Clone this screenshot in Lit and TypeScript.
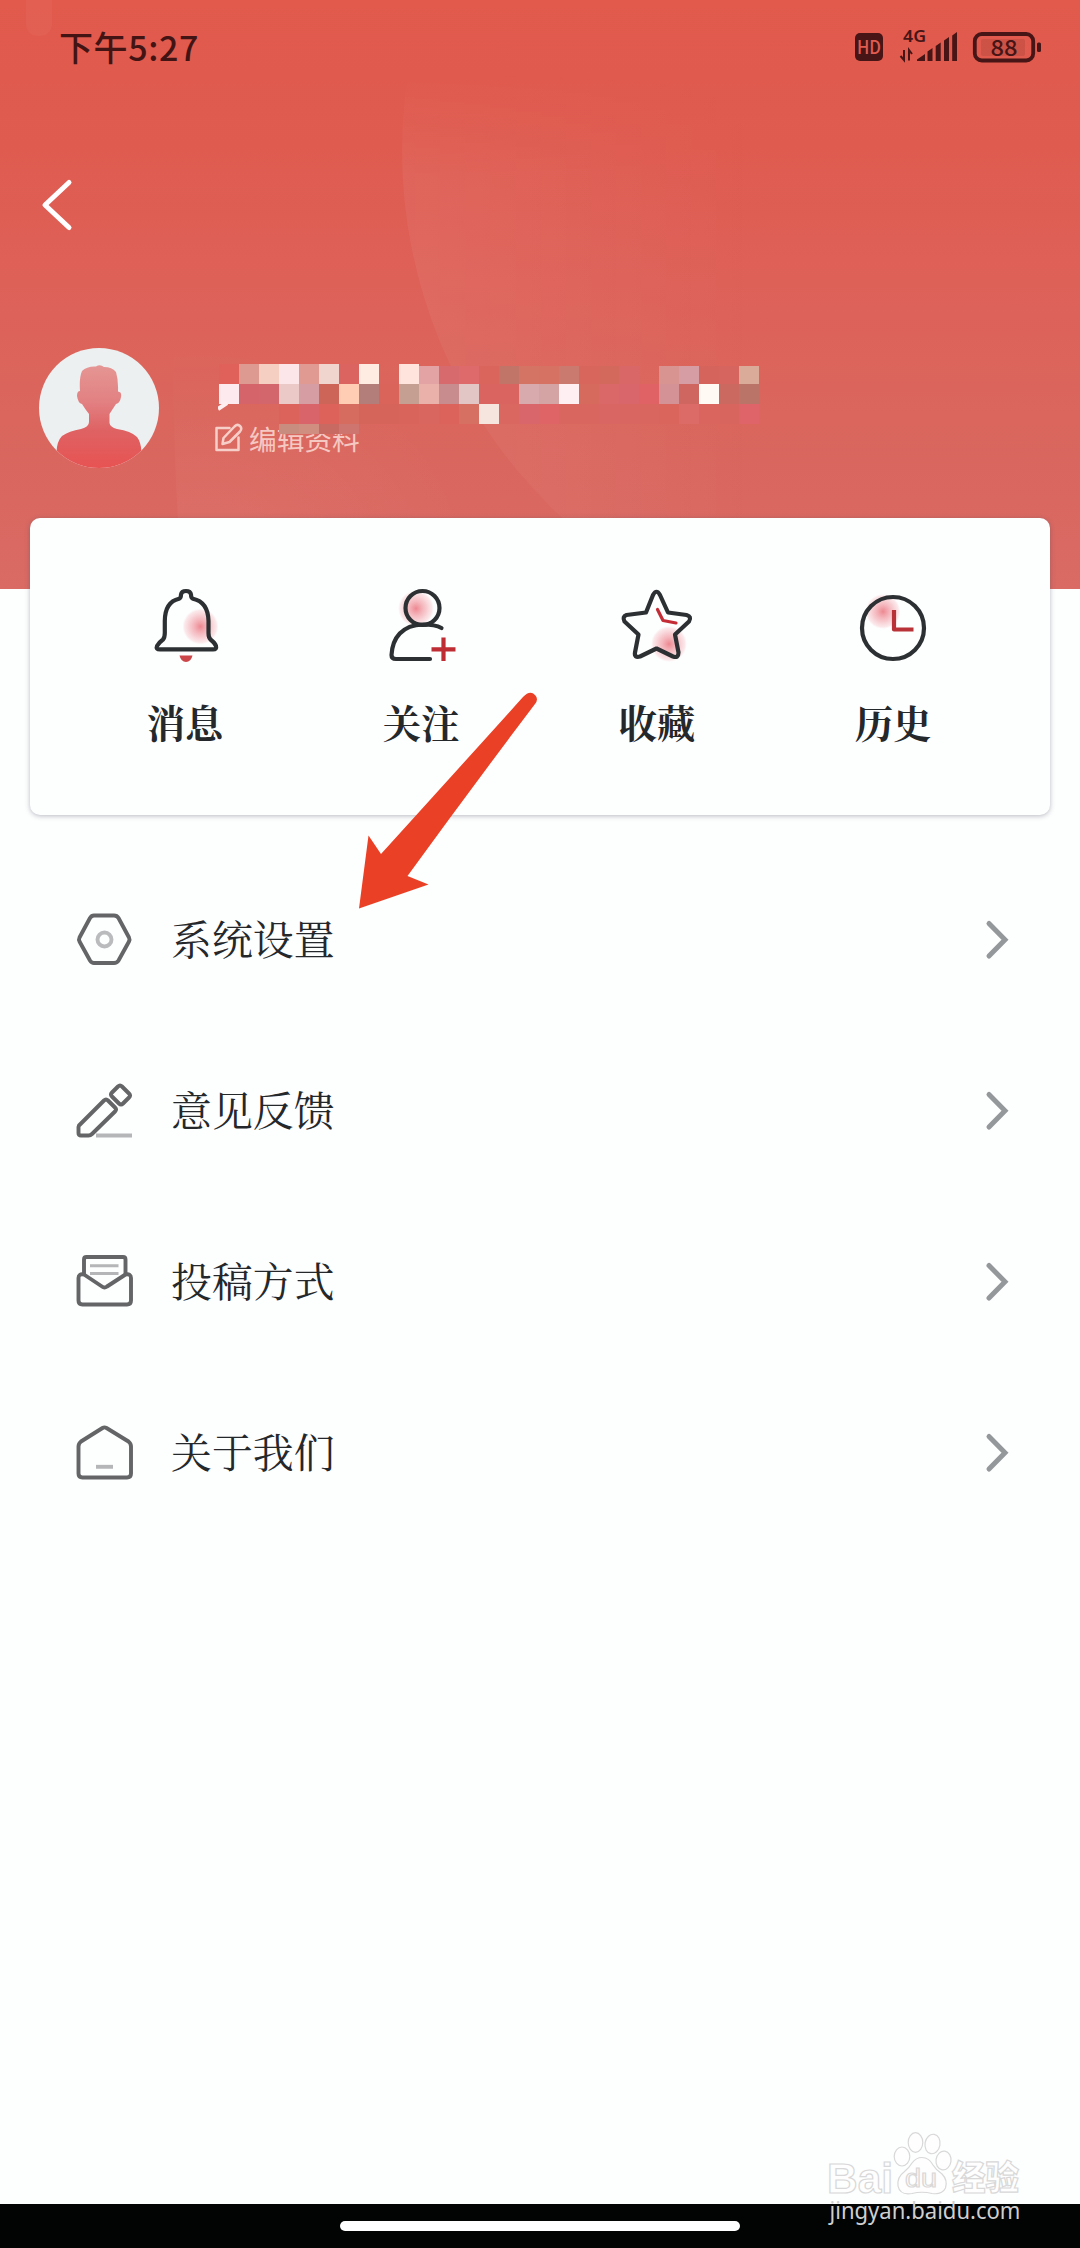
import { LitElement, html, css, svg } from "lit";
import { customElement, property } from "lit/decorators.js";

const SERIF = css`"Noto Serif CJK SC", "Source Han Serif SC", "Noto Sans CJK SC", serif`;

@customElement("status-bar")
class StatusBar extends LitElement {
  static styles = css`
    :host {
      display: flex;
      justify-content: space-between;
      height: 98px;
      box-sizing: border-box;
      padding: 22px 38px 0 59px;
      color: #431414;
      font-family: "Noto Sans CJK SC", sans-serif;
    }
    .time {
      font-size: 34px;
      line-height: 50px;
      font-weight: 500;
      letter-spacing: 0.6px;
    }
    .icons {
      display: block;
      width: 190px;
      height: 50px;
    }
  `;
  render() {
    return html`
      <div class="time">下午5:27</div>
      <svg class="icons" viewBox="852 22 190 50" fill="#471516">
        <rect x="855" y="33" width="28" height="28" rx="5" />
        <text x="857" y="53.8" font-size="18" font-weight="500" textLength="24" lengthAdjust="spacingAndGlyphs" fill="#e05c50" font-family="Noto Sans CJK SC">HD</text>
        <text x="903" y="41.800" font-size="16.500" font-weight="600" textLength="23" lengthAdjust="spacingAndGlyphs" font-family="Noto Sans">4G</text>
        <path d="M904 50v10l-3.500-4M909 60.500V50l3 4" fill="none" stroke="#471516" stroke-width="2" />
        <path d="M917 61v-1.500l8-5.500v7zM927.500 61V51.500l5-3.500v13zM935.700 61V46l5-3.500V61zM944 61V40.500l5-3.500V61zM952.200 61V35.500l4.800-3.500V61z" />
        <rect x="974.800" y="34" width="58.400" height="26.500" rx="7" fill="none" stroke="#471516" stroke-width="3.800" />
        <rect x="981" y="39" width="44" height="17" rx="2" opacity="0.12" />
        <rect x="1037" y="42.500" width="4" height="9.500" rx="1.500" />
        <text x="990.500" y="55.500" font-size="22.500" font-weight="500" textLength="27" lengthAdjust="spacingAndGlyphs" font-family="Noto Sans CJK SC">88</text>
      </svg>
    `;
  }
}

const BLANK = "";
const MOSAIC: string[][] = [
  ["#e0605a", "#dd9a90", "#f4cfc2", "#fde6e9", "#e19a92", "#f0d5cf", "#dc6460", "#feece2", BLANK, "#fee4dc", "#e3a3a4", "#d66a6c", "#df6a6b", "#da655c", "#c17468", "#d47464", "#d67264", "#cb7a70", "#d8665c", "#d3695c", "#d96768", BLANK, "#d79490", "#d69ea4", "#d5645c", "#d6655f", "#d9ab98"],
  ["#fdeaee", "#d4646a", "#d3656c", "#ebc9c6", "#d69ea3", "#cd6558", "#fecdb4", "#b37d79", "#db645a", "#c49f92", "#eab0aa", "#c88c8e", "#e2c6c6", "#da6560", "#da6560", "#d8aaad", "#d4a4a4", "#feeff3", "#d66b5d", "#da6868", "#d8666a", "#e06265", "#d49297", "#cf6660", "#fffbf4", "#cb6960", "#bb7468"],
  [BLANK, BLANK, BLANK, "#dc625c", "#d9656a", "#dc625a", "#d66c60", "#d5645a", "#d6645b", "#d8645b", "#d9675f", "#db635b", "#d67062", "#f6e4df", "#da6760", "#d9666a", "#de6466", "#d9665f", "#d9675f", "#da6663", "#d96661", "#d9665f", "#d9655c", "#dc6a66", "#d9655e", "#d8665f", "#de646a"],
  [BLANK, BLANK, BLANK, "#c98d80", "#cf8e80", "#c86a62", "#cf7570"],
];

@customElement("profile-summary")
class ProfileSummary extends LitElement {
  static styles = css`
    :host {
      display: flex;
      align-items: flex-start;
      padding: 0 39px;
    }
    .avatar {
      width: 120px;
      height: 120px;
      flex: none;
    }
    .info {
      position: relative;
      display: flex;
      flex-direction: column;
      margin-left: 55px;
      padding-top: 14px;
    }
    .name {
      height: 56px;
      width: 560px;
    }
    .mosaic {
      position: absolute;
      left: 4px;
      top: 14px;
      width: 545px;
      height: 74px;
    }
    .edit {
      display: flex;
      align-items: center;
      gap: 6px;
      height: 40px;
      color: #f5c8c2;
      font: 400 27.7px/40px "Noto Sans CJK SC", sans-serif;
    }
    .pen {
      width: 29px;
      height: 30px;
    }
  `;
  render() {
    return html`
      <svg class="avatar" viewBox="39 348 120 120">
        <defs>
          <linearGradient id="body" x1="0" y1="0" x2="0" y2="1">
            <stop offset="0" stop-color="#e59694" />
            <stop offset="0.35" stop-color="#e28082" />
            <stop offset="0.62" stop-color="#df6263" />
            <stop offset="1" stop-color="#e85252" />
          </linearGradient>
          <clipPath id="disc"><circle cx="99" cy="408" r="60" /></clipPath>
        </defs>
        <g clip-path="url(#disc)">
          <rect x="39" y="348" width="120" height="120" fill="#edf0f1" />
          <path fill="url(#body)" d="M82 371Q87 366 96 366.500Q100 364 104 367Q112 367 116 372Q118.500 380 118 391.500Q122 392 121 397Q120 403 116 404Q112 410 109.500 414V423Q110 427 117 429Q131 431 137 437Q141 442 141.500 452V470H56.500V452Q57 441 62 436Q69 431 81 429Q89 427 89 422V414Q85 409 82 404Q78 403 77 396Q77 391 80 391Q79 378 82 371Z" />
        </g>
      </svg>
      <div class="info">
        <div class="name"></div>
        <div class="edit">
          <svg class="pen" viewBox="214 424 29 30" fill="none" stroke="#f7cfc9" stroke-width="2.500" stroke-linejoin="round" stroke-linecap="round">
            <path d="M229.500 429H216.500V451H238.500V438.500" />
            <path d="M222.500 445L223.500 439L234.500 427.500Q237.500 424.500 240 427Q242.500 429.500 240 432.500L229.500 443L222.500 445Z" />
          </svg>
          <span>编辑资料</span>
        </div>
        <svg class="mosaic" viewBox="219 362 545 74" shape-rendering="crispEdges">
          ${MOSAIC.map((row, r) =>
            row.map((fill, c) => {
              if (!fill) return null;
              const inset = r === 0 && c > 9 ? 2 : 0;
              return svg`<rect x=${220 + c * 20} y=${364 + r * 20 + inset} width="20" height=${r === 3 ? 10 : 20 - inset} fill=${fill} />`;
            })
          )}
          <path d="M219 409L228 403" stroke="#ffeef0" stroke-width="4" shape-rendering="auto" />
        </svg>
      </div>
    `;
  }
}

const glow = (id: string, cx: number, cy: number, r: number) => svg`
  <defs><radialGradient id=${id}>
    <stop offset="0" stop-color="#e8606c" stop-opacity="0.75" />
    <stop offset="0.6" stop-color="#f0909a" stop-opacity="0.45" />
    <stop offset="0.88" stop-color="#f4a8b0" stop-opacity="0.26" />
    <stop offset="1" stop-color="#f8c0c8" stop-opacity="0" />
  </radialGradient></defs>
  <circle cx=${cx} cy=${cy} r=${r} fill="url(#${id})" stroke="none" />`;

const ACTIONS = [
  {
    label: "消息",
    icon: svg`${glow("g1", 51.5, 41.5, 18)}
      <path d="M11 64.300Q6.500 64.300 8 61Q10 57.500 14 54.500Q15.800 52.500 15.800 48V36Q16 17 30 13.800Q32 13 32 9.500Q32.500 6 37 6T42 9.500Q42 13 44 13.800Q59 17 59.500 36V48Q59.500 52.500 61.500 54.500Q66 58 67 61Q68 64.300 64 64.300Z" />
      <path d="M30.500 70.500H43.500Q42 77 37 77T30.500 70.500Z" fill="#cc4548" stroke="none" />`,
  },
  {
    label: "关注",
    icon: svg`${glow("g2", 31, 23.5, 18)}
      <circle cx="37.500" cy="23" r="17" />
      <path d="M56.500 43Q50 39.500 38 39.500C17 40 7.500 53 6.500 70Q6.500 74 11 74H45" />
      <path d="M58.500 52.500V76M46.500 64.300H70.500" stroke="#bd2d33" stroke-linecap="butt" />`,
  },
  {
    label: "收藏",
    icon: svg`${glow("g3", 48, 59, 18)}
      <path d="M32 10Q35.500 3.500 39 10L47 27.500L65.500 30Q71 31.500 68 36.500L54 49.500L57.500 67.500Q57.500 73.500 52 71.500L35.500 63.500L19 71.500Q13 73 14 67.500L17.500 49.500L3.500 36.500Q1 31.500 5.500 30L25 27.500Z" />
      <path d="M36.500 24.500L42 35.500L55 38" stroke="#c42d36" stroke-width="3.200" />`,
  },
  {
    label: "历史",
    icon: svg`${glow("g4", 26, 26.500, 17.500)}
      <circle cx="36" cy="43" r="31" />
      <path d="M37 25V44.500H56.500" stroke="#b93237" stroke-linecap="butt" />`,
  },
];

@customElement("quick-actions")
class QuickActions extends LitElement {
  static styles = css`
    :host {
      display: grid;
      grid-template-columns: repeat(4, 1fr);
      box-sizing: border-box;
      height: 297px;
      margin: 0 30px;
      padding: 67px 39px 0 37px;
      border-radius: 10px;
      background: #fdfefe;
      box-shadow: 0 1px 5px rgba(70, 75, 95, 0.38);
    }
    .action {
      display: flex;
      flex-direction: column;
      align-items: center;
    }
    .icon {
      width: 72px;
      height: 80px;
      overflow: visible;
    }
    .label {
      margin-top: 29px;
      font-family: ${SERIF};
      font-size: 38.3px;
      line-height: 56px;
      font-weight: 700;
      color: #25282b;
    }
  `;
  render() {
    return ACTIONS.map(
      (a) => html`<div class="action">
        <svg class="icon" viewBox="0 0 72 80" fill="none" stroke="#2d3032" stroke-width="4.200" stroke-linecap="round" stroke-linejoin="round">${a.icon}</svg>
        <span class="label">${a.label}</span>
      </div>`
    );
  }
}

const ITEMS = [
  {
    label: "系统设置",
    icon: svg`<path d="M18 4.500H38Q41 4.500 42.500 7L53 26.500Q54 28.500 53 30.500L42.500 49.500Q41 52 38 52H18Q15.500 52 14 49.500L3.500 30.500Q2.500 28.500 3.500 26.500L14 7Q15.500 4.500 18 4.500Z" />
      <circle cx="28.500" cy="28.500" r="7" stroke="#b9bbbc" />`,
  },
  {
    label: "意见反馈",
    icon: svg`<path d="M3 43.500L28 18.500Q30 16.500 32 18.500L39 25.500Q41 27.500 39 29.500L16 52Q14.500 53.500 12.500 53.500H5Q2.500 53.500 2.500 51V45Z" />
      <path d="M42 4.500Q44 2.500 46 4.500L53 11.500Q55 13.500 53 15.500L47 21.500Q45 23.500 43 21.500L36 14.500Q34 12.500 36 10.500Z" />
      <path d="M20 53.500H56" stroke="#b4b6b7" stroke-linecap="butt" />`,
  },
  {
    label: "投稿方式",
    icon: svg`<path d="M8 23V6.500Q8 4 10.500 4H47Q49.500 4 49.500 6.500V23" />
      <path d="M8 21.500Q2.500 20.500 2.500 25V47.500Q2.500 51.500 6.500 51.500H51Q55 51.500 55 47.500V25Q55 20.500 49.500 21.500L31 33.500Q28.500 35.500 26 33.500Z" />
      <path d="M14 12.800H42.500M14 20.500H42.500" stroke="#b4b6b7" stroke-width="3" stroke-linecap="butt" />`,
  },
  {
    label: "关于我们",
    icon: svg`<path d="M2.500 22.500Q2.500 19.500 5 17.500L26.500 4Q28.500 2.800 30.500 4L52.500 17.500Q55 19.500 55 22.500V49.500Q55 53.500 51 53.500H6.500Q2.500 53.500 2.500 49.500Z" />
      <path d="M20 42.800H37" stroke="#b4b6b7" stroke-linecap="butt" />`,
  },
];

@customElement("menu-row")
class MenuRow extends LitElement {
  @property({ attribute: false }) item = ITEMS[0];
  static styles = css`
    :host {
      display: flex;
      align-items: center;
      height: 171px;
      padding: 0 69px 0 76px;
    }
    .icon {
      width: 57px;
      height: 57px;
    }
    .label {
      flex: 1;
      margin-left: 38px;
      padding-bottom: 4px;
      font-family: ${SERIF};
      font-size: 40.9px;
      line-height: 60px;
      color: #25282b;
    }
    .chevron {
      width: 28px;
      height: 44px;
    }
  `;
  render() {
    return html`
      <svg class="icon" viewBox="0 0 57 57" fill="none" stroke="#636566" stroke-width="3.900" stroke-linejoin="round">${this.item.icon}</svg>
      <span class="label">${this.item.label}</span>
      <svg class="chevron" viewBox="983 917 28 44" fill="none" stroke="#95989b" stroke-width="5" stroke-linecap="round">
        <path d="M989 922.500L1005 938.800L989 955" />
      </svg>
    `;
  }
}

@customElement("site-watermark")
class SiteWatermark extends LitElement {
  static styles = css`
    :host {
      display: block;
    }
    .mark {
      display: block;
      width: 205px;
      height: 100px;
    }
  `;
  render() {
    return html`
      <svg class="mark" viewBox="822 2128 205 100">
        <g fill="#fefefe" stroke="#d8d8d8" stroke-width="1.200">
          <text x="827" y="2192.500" font-size="43" textLength="66" lengthAdjust="spacingAndGlyphs" font-family="Liberation Sans" font-weight="700">Bai</text>
          <ellipse cx="902" cy="2156.500" rx="7.800" ry="9.500" />
          <ellipse cx="915.500" cy="2142.500" rx="7.300" ry="9.800" />
          <ellipse cx="932.500" cy="2144" rx="7.500" ry="9.800" transform="rotate(10 932.500 2144)" />
          <ellipse cx="943.500" cy="2160.500" rx="7.500" ry="9.500" transform="rotate(8 943.500 2160.500)" />
          <path d="M922 2157.500Q929 2157.500 933 2165Q936 2170 942 2174Q948 2180 945.500 2188Q942 2195 932 2193.500Q922 2191 912 2193.500Q900 2195.500 898 2186Q897 2177 904 2172Q909 2168 912 2163Q916 2157.500 922 2157.500Z" />
          <text x="905" y="2187" font-size="26" textLength="32" lengthAdjust="spacingAndGlyphs" font-family="Liberation Sans" font-weight="400">du</text>
          <text x="952" y="2190" font-size="34" textLength="67" lengthAdjust="spacingAndGlyphs" font-family="Noto Sans CJK SC" font-weight="900">经验</text>
        </g>
        <text x="829.500" y="2218.500" font-size="24" textLength="191" lengthAdjust="spacingAndGlyphs" fill="#cfcfcf" font-family="Noto Sans">jingyan.baidu.com</text>
      </svg>
    `;
  }
}

@customElement("app-root")
class AppRoot extends LitElement {
  static styles = css`
    :host {
      position: relative;
      display: flex;
      flex-direction: column;
      width: 1080px;
      height: 2248px;
      overflow: hidden;
      background: #fdfefe;
    }
    .header {
      position: relative;
      flex: none;
      height: 589px;
      background: linear-gradient(180deg, #e15a4c 0%, #df5b50 25%, #de6158 48%, #da665d 70%, #d96a64 100%);
    }
    .wash {
      position: absolute;
      inset: 0;
      width: 1080px;
      height: 589px;
    }
    .content {
      position: relative;
    }
    .nav {
      display: flex;
      height: 250px;
      box-sizing: border-box;
      padding: 79px 0 0 38px;
    }
    .back {
      width: 36px;
      height: 56px;
    }
    .card {
      position: relative;
      margin-top: -71px;
      flex: none;
    }
    .menu {
      flex: 1;
      padding-top: 39px;
    }
    .homebar {
      display: flex;
      justify-content: center;
      align-items: flex-start;
      flex: none;
      height: 44px;
      box-sizing: border-box;
      padding-top: 17px;
      background: #020303;
    }
    .pill {
      width: 400px;
      height: 10px;
      border-radius: 5px;
      background: #fff;
    }
    .pointer {
      position: absolute;
      left: 350px;
      top: 684px;
      width: 200px;
      height: 232px;
    }
    .watermark {
      position: absolute;
      left: 822px;
      top: 2128px;
    }
  `;
  render() {
    return html`
      <div class="header">
        <svg class="wash" viewBox="0 0 1080 589">
          <defs>
            <linearGradient id="arc" x1="0" x2="1" y1="0" y2="0">
              <stop offset="0" stop-color="#fff" stop-opacity="0.055" />
              <stop offset="0.35" stop-color="#fff" stop-opacity="0" />
            </linearGradient>
            <linearGradient id="fade" x1="0" x2="0" y1="0" y2="1">
              <stop offset="0.12" stop-color="#000" />
              <stop offset="0.3" stop-color="#fff" />
            </linearGradient>
            <mask id="lower"><rect width="1080" height="589" fill="url(#fade)" /></mask>
            <radialGradient id="edge" cx="0.1" cy="0.9" r="0.9">
              <stop offset="0" stop-color="#fff" stop-opacity="0.045" />
              <stop offset="1" stop-color="#fff" stop-opacity="0" />
            </radialGradient>
          </defs>
          <circle cx="905" cy="150" r="503" fill="url(#arc)" mask="url(#lower)" />
          <path d="M172 340Q174 470 182 589H480V340Z" fill="url(#edge)" />
          <rect x="26" y="-20" width="26" height="56" rx="12" fill="#fff" opacity="0.035" />
        </svg>
        <div class="content">
          <status-bar></status-bar>
          <div class="nav">
            <svg class="back" viewBox="38 177 36 56" fill="none" stroke="#fff" stroke-width="5" stroke-linecap="round" stroke-linejoin="round">
              <path d="M69 182.500L45 205L69 227.500" />
            </svg>
          </div>
          <profile-summary></profile-summary>
        </div>
      </div>
      <quick-actions class="card"></quick-actions>
      <div class="menu">${ITEMS.map((item) => html`<menu-row .item=${item}></menu-row>`)}</div>
      <div class="homebar"><div class="pill"></div></div>
      <svg class="pointer" viewBox="350 684 200 232">
        <path fill="#ea4026" d="M359 908.500L368.500 835.500L381 854Q450 778 523 697Q530 689.500 535 695Q539 699 535 704Q470 790 407.500 876L428.500 884.500Z" />
      </svg>
      <site-watermark class="watermark"></site-watermark>
    `;
  }
}
